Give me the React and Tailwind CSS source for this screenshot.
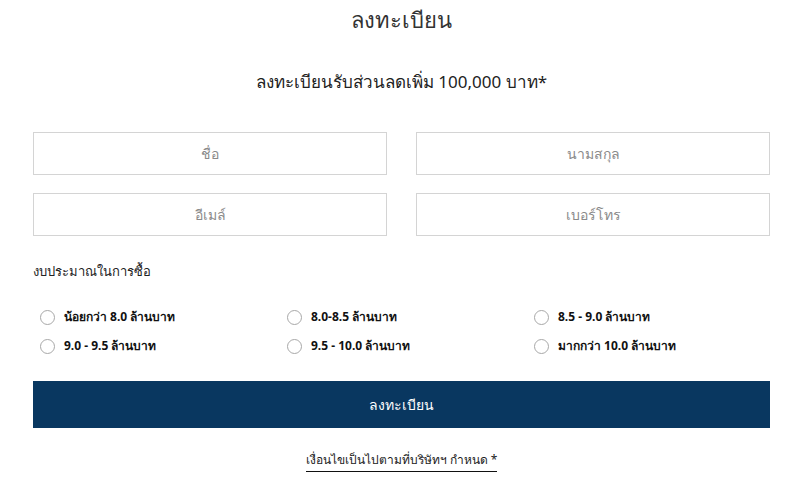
const budgets = [
  'น้อยกว่า 8.0 ล้านบาท',
  '8.0-8.5 ล้านบาท',
  '8.5 - 9.0 ล้านบาท',
  '9.0 - 9.5 ล้านบาท',
  '9.5 - 10.0 ล้านบาท',
  'มากกว่า 10.0 ล้านบาท',
];

const Field = ({ placeholder }) => (
  <input
    type="text"
    placeholder={placeholder}
    className="h-[43px] w-full border border-[#d4d4d4] bg-white text-center text-[14px] text-[#555] placeholder:text-[#8a8a8a] outline-none"
  />
);

const App = () => {
  return (
    <div className="min-h-screen bg-white pl-[33px] pr-[30px] font-['Noto_Sans','Liberation_Sans',sans-serif] text-[#222]">
      <h1 className="pt-[4px] text-center text-[22px] leading-[30px] text-[#333]">ลงทะเบียน</h1>

      <h2 className="mt-[35px] text-center text-[17px] leading-[26px] text-[#222]">
        ลงทะเบียนรับส่วนลดเพิ่ม 100,000 บาท*
      </h2>

      <div className="mt-[37px] grid grid-cols-2 gap-x-[29px] gap-y-[18px]">
        <Field placeholder="ชื่อ" />
        <Field placeholder="นามสกุล" />
        <Field placeholder="อีเมล์" />
        <Field placeholder="เบอร์โทร" />
      </div>

      <p className="mt-[25px] text-[13px] leading-[20px] text-[#222]">งบประมาณในการซื้อ</p>

      <div className="mt-[26px] grid grid-cols-[247px_247px_1fr] gap-y-[9px] pl-[7px]">
        {budgets.map((b) => (
          <label key={b} className="flex items-center gap-[9px] text-[12px] font-bold leading-[20px] text-[#111]">
            <span className="h-[15px] w-[15px] rounded-full border border-[#a8a8a8] bg-white" />
            {b}
          </label>
        ))}
      </div>

      <button className="mt-[25px] h-[47px] w-full bg-[#093760] text-[14px] text-white">ลงทะเบียน</button>

      <div className="mt-[18px] text-center">
        <span className="border-b border-[#111] pb-[3px] text-[12px] text-[#222]">
          เงื่อนไขเป็นไปตามที่บริษัทฯ กำหนด *
        </span>
      </div>
    </div>
  );
};

export default App;
